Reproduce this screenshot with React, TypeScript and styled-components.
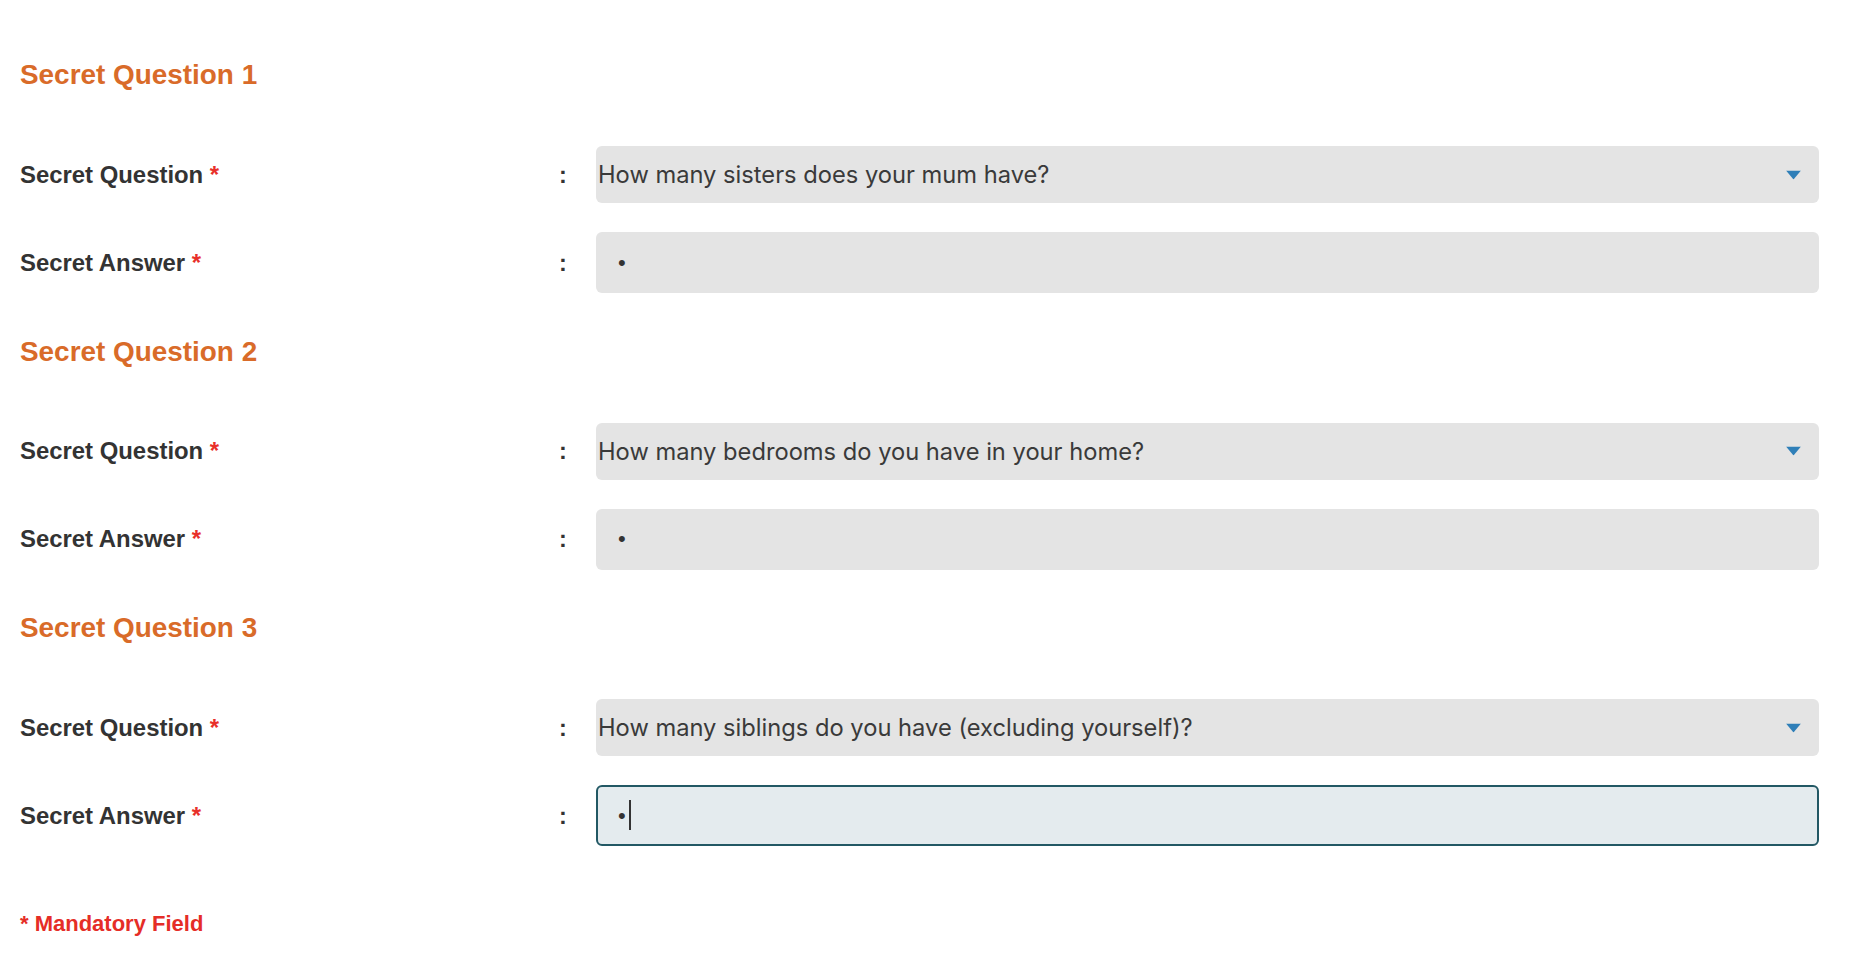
import React from "react";
import styled, { createGlobalStyle, css } from "styled-components";

const GlobalStyle = createGlobalStyle`
  html, body {
    margin: 0;
    padding: 0;
    background: #ffffff;
  }
  body {
    font-family: "Liberation Sans", Arial, sans-serif;
  }
`;

const Page = styled.main`
  display: flex;
  flex-direction: column;
  padding: 59px 33px 0 20px;
`;

const Sections = styled.div`
  display: flex;
  flex-direction: column;
  gap: 42.5px;
`;

const Section = styled.section`
  display: flex;
  flex-direction: column;
`;

const SectionTitle = styled.h2`
  margin: 0 0 55px;
  font-family: "Liberation Sans", Arial, sans-serif;
  font-weight: 700;
  font-size: 27.9px;
  line-height: 32px;
  color: #d96b29;
`;

const Fields = styled.div`
  display: flex;
  flex-direction: column;
  gap: 29px;
`;

const FieldRow = styled.div`
  display: grid;
  grid-template-columns: 539px 37px 1fr;
  align-items: center;
`;

const Label = styled.label`
  font-family: "Liberation Sans", Arial, sans-serif;
  font-weight: 700;
  font-size: 23.9px;
  line-height: 28px;
  color: #333333;
`;

const Required = styled.span`
  color: #e8302a;
`;

const Colon = styled.span`
  font-family: "Liberation Sans", Arial, sans-serif;
  font-weight: 700;
  font-size: 23.5px;
  line-height: 28px;
  color: #333333;
`;

const FieldBox = styled.div`
  position: relative;
  display: flex;
`;

const Select = styled.select`
  appearance: none;
  -webkit-appearance: none;
  width: 100%;
  height: 57px;
  border: 0;
  border-radius: 6px;
  background: #e4e4e4;
  padding: 0 48px 0 2px;
  font-family: Inter, "Noto Sans", sans-serif;
  font-size: 23.7px;
  color: #3a3a3a;
  outline: none;
`;

const Arrow = styled.svg`
  position: absolute;
  right: 18px;
  top: 50%;
  transform: translateY(-50%);
  pointer-events: none;
`;

const AnswerInput = styled.input<{ $focused?: boolean }>`
  box-sizing: border-box;
  width: 100%;
  height: 61px;
  border: 2px solid transparent;
  border-radius: 6px;
  background: #e4e4e4;
  padding: 0 20px 0 20px;
  font-family: "Liberation Sans", Arial, sans-serif;
  font-size: 22px;
  color: #333333;
  outline: none;
  caret-color: transparent;

  ${(p) =>
    p.$focused &&
    css`
      border-color: #225864;
      background: #e4ebee;
    `}
`;

const Caret = styled.span`
  position: absolute;
  left: 33px;
  top: 15px;
  width: 2px;
  height: 30px;
  background: #333333;
`;

const Mandatory = styled.p`
  margin: 65px 0 0;
  font-family: "Liberation Sans", Arial, sans-serif;
  font-weight: 700;
  font-size: 22px;
  line-height: 26px;
  color: #e52d27;
`;

type QuestionSet = {
  title: string;
  question: string;
  focused?: boolean;
};

const sets: QuestionSet[] = [
  { title: "Secret Question 1", question: "How many sisters does your mum have?" },
  { title: "Secret Question 2", question: "How many bedrooms do you have in your home?" },
  {
    title: "Secret Question 3",
    question: "How many siblings do you have (excluding yourself)?",
    focused: true,
  },
];

function DropArrow() {
  return (
    <Arrow width="15" height="9" viewBox="0 0 15 9" aria-hidden="true">
      <polygon points="0,0 15,0 7.5,9" fill="#2f7fb8" />
    </Arrow>
  );
}

function QuestionSection({ set, index }: { set: QuestionSet; index: number }) {
  const qId = `question-${index}`;
  const aId = `answer-${index}`;
  return (
    <Section>
      <SectionTitle>{set.title}</SectionTitle>
      <Fields>
        <FieldRow>
          <Label htmlFor={qId}>
            Secret Question <Required>*</Required>
          </Label>
          <Colon>:</Colon>
          <FieldBox>
            <Select id={qId} defaultValue={set.question}>
              <option value={set.question}>{set.question}</option>
            </Select>
            <DropArrow />
          </FieldBox>
        </FieldRow>
        <FieldRow>
          <Label htmlFor={aId}>
            Secret Answer <Required>*</Required>
          </Label>
          <Colon>:</Colon>
          <FieldBox>
            <AnswerInput
              id={aId}
              type="password"
              defaultValue="1"
              $focused={set.focused}
            />
            {set.focused && <Caret />}
          </FieldBox>
        </FieldRow>
      </Fields>
    </Section>
  );
}

export default function App() {
  return (
    <>
      <GlobalStyle />
      <Page>
        <Sections>
          {sets.map((s, i) => (
            <QuestionSection key={s.title} set={s} index={i + 1} />
          ))}
        </Sections>
        <Mandatory>* Mandatory Field</Mandatory>
      </Page>
    </>
  );
}
